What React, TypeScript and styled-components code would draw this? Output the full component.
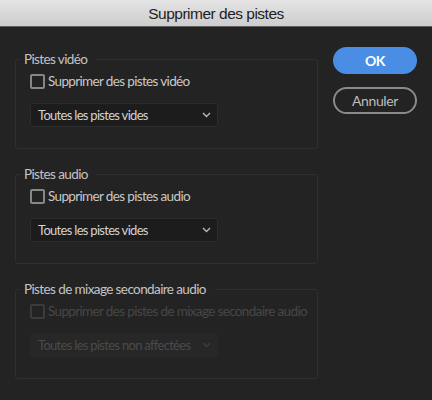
import React from "react";
import styled, { createGlobalStyle } from "styled-components";

const GlobalStyle = createGlobalStyle`
  html, body {
    margin: 0;
    padding: 0;
    background: #232323;
  }
  body {
    font-family: Lato, "Liberation Sans", sans-serif;
  }
`;

type Group = {
  legend: string;
  check: string;
  option: string;
  disabled?: boolean;
};

const groups: Group[] = [
  {
    legend: "Pistes vidéo",
    check: "Supprimer des pistes vidéo",
    option: "Toutes les pistes vides",
  },
  {
    legend: "Pistes audio",
    check: "Supprimer des pistes audio",
    option: "Toutes les pistes vides",
  },
  {
    legend: "Pistes de mixage secondaire audio",
    check: "Supprimer des pistes de mixage secondaire audio",
    option: "Toutes les pistes non affectées",
    disabled: true,
  },
];

function Chevron() {
  return (
    <svg width="9" height="6" viewBox="0 0 9 6" fill="none">
      <path d="M1 1l3.5 3.5L8 1" stroke="currentColor" strokeWidth="1.4" />
    </svg>
  );
}

export default function App() {
  return (
    <>
      <GlobalStyle />
      <Dialog>
        <TitleBar>Supprimer des pistes</TitleBar>
        <Body>
          <Groups>
            {groups.map((g) => (
              <Fieldset key={g.legend}>
                <Legend>{g.legend}</Legend>
                <Content>
                  <CheckRow $disabled={g.disabled}>
                    <Box $disabled={g.disabled} />
                    {g.check}
                  </CheckRow>
                  <Select $disabled={g.disabled}>
                    <SelectText>{g.option}</SelectText>
                    <Chevron />
                  </Select>
                </Content>
              </Fieldset>
            ))}
          </Groups>
          <Buttons>
            <Button $primary>OK</Button>
            <Button>Annuler</Button>
          </Buttons>
        </Body>
      </Dialog>
    </>
  );
}

const Dialog = styled.div`
  width: 432px;
  height: 400px;
  background: #232323;
  overflow: hidden;
`;

const TitleBar = styled.div`
  height: 26px;
  line-height: 27px;
  text-align: center;
  font-family: "Liberation Sans", Arial, sans-serif;
  font-size: 15.5px;
  letter-spacing: -0.5px;
  color: #1e1e1e;
  background: linear-gradient(#e4e4e4, #cdcdcd);
  border-bottom: 1px solid #5e5e5e;
`;

const Body = styled.div`
  display: flex;
  gap: 15px;
  padding: 20px 15px 0 15px;
`;

const Groups = styled.div`
  width: 303px;
  flex: none;
  display: flex;
  flex-direction: column;
  gap: 16px;
  margin-top: 3px;
`;

const Fieldset = styled.fieldset`
  margin: 0;
  padding: 0;
  min-width: 0;
  border: 1px solid #2f2f2f;
  border-radius: 3px;
`;

const Legend = styled.legend`
  margin-left: 5px;
  padding: 0 9px 0 3px;
  font-size: 13.5px;
  letter-spacing: -0.6px;
  line-height: 18px;
  color: #c4c4c4;
  white-space: nowrap;
`;

const Content = styled.div`
  display: flex;
  flex-direction: column;
  align-items: flex-start;
  gap: 13px;
  padding: 4px 0 21px 14px;
`;

const CheckRow = styled.label<{ $disabled?: boolean }>`
  display: flex;
  align-items: center;
  gap: 3px;
  height: 18px;
  font-size: 13.5px;
  letter-spacing: -0.65px;
  white-space: nowrap;
  color: ${(p) => (p.$disabled ? "#474747" : "#c8c8c8")};
`;

const Box = styled.span<{ $disabled?: boolean }>`
  width: 15px;
  height: 15px;
  box-sizing: border-box;
  border: 2px solid ${(p) => (p.$disabled ? "#3b3b3b" : "#878787")};
  border-radius: 2px;
`;

const Select = styled.div<{ $disabled?: boolean }>`
  width: 188px;
  height: 24px;
  box-sizing: border-box;
  display: flex;
  align-items: center;
  gap: 6px;
  padding: 0 6px 0 7px;
  font-size: 13px;
  letter-spacing: -0.7px;
  color: ${(p) => (p.$disabled ? "#4a4a4a" : "#d2d2d2")};
  background: ${(p) => (p.$disabled ? "#272727" : "#1c1c1c")};
  border: 1px solid ${(p) => (p.$disabled ? "#272727" : "#2c2c2c")};
  border-radius: 3px;

  svg {
    flex: none;
    color: ${(p) => (p.$disabled ? "#3e3e3e" : "#b8b8b8")};
  }
`;

const SelectText = styled.span`
  flex: 1;
  min-width: 0;
  white-space: nowrap;
`;

const Buttons = styled.div`
  display: flex;
  flex-direction: column;
  gap: 13px;
`;

const Button = styled.div<{ $primary?: boolean }>`
  width: 84px;
  height: 27px;
  box-sizing: border-box;
  display: flex;
  align-items: center;
  justify-content: center;
  border-radius: 14px;
  font-size: 14px;
  letter-spacing: -0.4px;
  font-weight: ${(p) => (p.$primary ? 700 : 400)};
  color: ${(p) => (p.$primary ? "#ffffff" : "#bdbdbd")};
  background: ${(p) => (p.$primary ? "#4a8de4" : "transparent")};
  border: 2px solid ${(p) => (p.$primary ? "#4a8de4" : "#8a8a8a")};
`;
